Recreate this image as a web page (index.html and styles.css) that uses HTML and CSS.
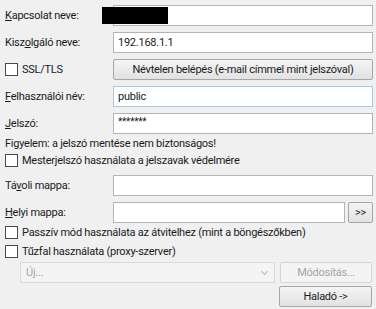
FILE: index.html
```html
<!DOCTYPE html>
<html lang="hu">
<head>
    <meta charset="UTF-8">
    <title>Kapcsolat beállításai</title>
    <link rel="stylesheet" href="styles.css">
</head>
<body>
    <div class="dialog">
        <div class="row field first">
            <label class="lbl"><u>K</u>apcsolat neve:</label>
            <input class="box" type="text" value="">
            <div class="redact"></div>
        </div>
        <div class="row field">
            <label class="lbl">Kisz<u>o</u>lgáló neve:</label>
            <input class="box" type="text" value="192.168.1.1">
        </div>
        <div class="row field">
            <label class="check"><span class="tick"></span>SSL/TLS</label>
            <button class="btn">Névtelen belépés (e-mail címmel mint jelszóval)</button>
        </div>
        <div class="row field">
            <label class="lbl"><u>F</u>elhasználói név:</label>
            <input class="box hot" type="text" value="public">
        </div>
        <div class="row field">
            <label class="lbl"><u>J</u>elszó:</label>
            <input class="box pass" type="text" value="*******">
        </div>
        <div class="note">Figyelem: a jelszó mentése nem biztonságos!</div>
        <div class="line">
            <label class="check"><span class="tick"></span>Mesterjelszó használata a jelszavak védelmére</label>
        </div>
        <div class="row field gap">
            <label class="lbl">Tá<u>v</u>oli mappa:</label>
            <input class="box" type="text" value="">
        </div>
        <div class="row field">
            <label class="lbl"><u>H</u>elyi mappa:</label>
            <div class="browse">
                <input class="box" type="text" value="">
                <button class="btn small">&gt;&gt;</button>
            </div>
        </div>
        <div class="line">
            <label class="check"><span class="tick"></span>Passzív mód használata az átvitelhez (mint a böngészőkben)</label>
        </div>
        <div class="line">
            <label class="check"><span class="tick"></span>Tűzfal használata (proxy-szerver)</label>
        </div>
        <div class="proxy">
            <div class="combo">Új...<span class="arrow"></span></div>
            <button class="btn off">Módosítás...</button>
        </div>
        <div class="footer">
            <button class="btn">Haladó -&gt;</button>
        </div>
    </div>
</body>
</html>
```
FILE: styles.css
```css
body {
    margin: 0;
    background-color: #f0f0f0;
    font-family: Roboto, "Liberation Sans", sans-serif;
    font-size: 11px;
    letter-spacing: -0.25px;
    color: #1a1a1a;
}
.dialog {
    padding: 5px 3px 0 5px;
}
.row {
    display: grid;
    grid-template-columns: 108px 1fr;
    align-items: center;
    height: 21px;
    margin-top: 6px;
    position: relative;
}
.row.first {
    margin-top: 0;
}
.lbl {
    white-space: nowrap;
}
.box {
    box-sizing: border-box;
    width: 100%;
    height: 21px;
    margin: 0;
    padding: 0 4px;
    border: 1px solid #b4b4b4;
    background: white;
    font: inherit;
    letter-spacing: inherit;
    color: #1a1a1a;
    outline: none;
}
.box.hot {
    border-color: #a9c6e2;
}
.box.pass {
    font-size: 10px;
    padding-bottom: 5px;
}
.redact {
    position: absolute;
    left: 97px;
    top: 2px;
    width: 66px;
    height: 17px;
    background: #000;
}
.btn {
    box-sizing: border-box;
    height: 21px;
    margin: 0;
    padding: 0 4px;
    border: 1px solid #a6a6a6;
    border-radius: 2px;
    background: linear-gradient(#f4f4f4, #e2e2e2);
    font: inherit;
    letter-spacing: inherit;
    color: #1a1a1a;
    white-space: nowrap;
}
.btn.small {
    width: 25px;
    padding: 0;
}
.btn.off {
    color: #a4a4a4;
    border-color: #d6d6d6;
    background: #f4f4f4;
}
.check {
    display: flex;
    align-items: center;
    gap: 4px;
    white-space: nowrap;
}
.tick {
    box-sizing: border-box;
    width: 13px;
    height: 13px;
    border: 1px solid #4a4a4a;
    background: white;
}
.note {
    margin-top: 2px;
    height: 15px;
    line-height: 15px;
    white-space: nowrap;
}
.line {
    display: flex;
    align-items: center;
    height: 17px;
    margin-top: 1px;
}
.line + .line {
    margin-top: 2px;
}
.browse {
    display: grid;
    grid-template-columns: 1fr 25px;
    gap: 3px;
}
.proxy {
    display: grid;
    grid-template-columns: 255px 92px;
    gap: 5px;
    margin: 2px 0 0 15px;
    height: 21px;
}
.combo {
    box-sizing: border-box;
    height: 21px;
    padding: 0 5px;
    border: 1px solid #dadada;
    background: #f4f4f4;
    color: #a4a4a4;
    line-height: 19px;
    position: relative;
}
.arrow {
    position: absolute;
    right: 7px;
    top: 6px;
    width: 4px;
    height: 4px;
    border-right: 1px solid #b8b8b8;
    border-bottom: 1px solid #b8b8b8;
    transform: rotate(45deg);
}
.footer {
    display: flex;
    justify-content: flex-end;
    margin-top: 3px;
    padding-right: 1px;
}
.footer .btn {
    width: 93px;
}
```
